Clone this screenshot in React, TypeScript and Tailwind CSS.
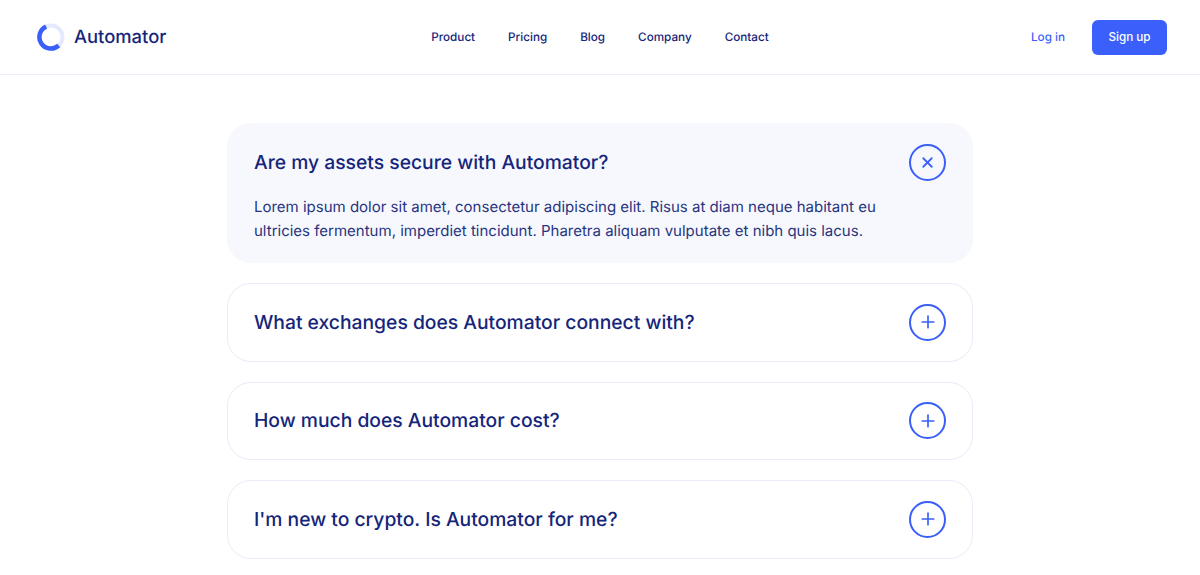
import { Plus, X } from 'lucide-react';

const navLinks = ['Product', 'Pricing', 'Blog', 'Company', 'Contact'];

const questions = [
  'What exchanges does Automator connect with?',
  'How much does Automator cost?',
  "I'm new to crypto. Is Automator for me?",
];

function Logo() {
  return (
    <svg width="28" height="28" viewBox="0 0 28 28" fill="none">
      <circle cx="14" cy="14" r="11.5" stroke="#e4e9ff" strokeWidth="4" />
      <path d="M9.1 3.6A11.5 11.5 0 1 0 21.7 22.5" stroke="#3a5ffb" strokeWidth="4.5" />
    </svg>
  );
}

export default function App() {
  return (
    <div className="h-[575px] overflow-hidden bg-white text-[#15257a] font-['Inter',sans-serif] [text-rendering:geometricPrecision]">
      {/* Header */}
      <header className="h-[75px] flex items-center justify-between pl-[37px] pr-[33px] border-b border-[#ecedf8]">
        <div className="w-[200px] flex items-center gap-[9px]">
          <Logo />
          <span className="pt-[1px] text-[18.4px] font-medium">Automator</span>
        </div>
        <nav className="pt-[1px] flex items-center gap-[33px] text-[11.7px] font-medium">
          {navLinks.map((link) => (
            <a key={link}>{link}</a>
          ))}
        </nav>
        <div className="w-[204px] flex items-center justify-end gap-[27px] text-[11.7px] font-medium">
          <a className="pt-[1px] text-[#3a5ffb]">Log in</a>
          <button className="w-[75px] h-[35px] pt-[2px] rounded-md bg-[#3a5ffb] text-white">Sign up</button>
        </div>
      </header>

      {/* FAQ */}
      <main className="w-[746px] mx-auto pt-[48px] flex flex-col gap-[20px]">
        <div className="h-[140px] rounded-[24px] bg-[#f7f8fe] px-[27px] pt-[21px]">
          <div className="flex items-center justify-between">
            <h3 className="text-[19.3px] font-medium">Are my assets secure with Automator?</h3>
            <span className="w-[37px] h-[37px] rounded-full border-2 border-[#3a5ffb] text-[#3a5ffb] flex items-center justify-center">
              <X size={17} strokeWidth={2.5} />
            </span>
          </div>
          <p className="mt-[14px] text-[15px] leading-[24px] text-[#27357f]">
            Lorem ipsum dolor sit amet, consectetur adipiscing elit. Risus at diam neque habitant eu
            <br />
            ultricies fermentum, imperdiet tincidunt. Pharetra aliquam vulputate et nibh quis lacus.
          </p>
        </div>
        {questions.map((q) => (
          <div key={q} className="h-[78.5px] rounded-[24px] border border-[#e9ebfa] px-[26px] flex items-center justify-between">
            <h3 className="text-[19.3px] font-medium">{q}</h3>
            <span className="w-[37px] h-[37px] rounded-full border-2 border-[#3a5ffb] text-[#3a5ffb] flex items-center justify-center">
              <Plus size={20} strokeWidth={2} />
            </span>
          </div>
        ))}
      </main>
    </div>
  );
}
